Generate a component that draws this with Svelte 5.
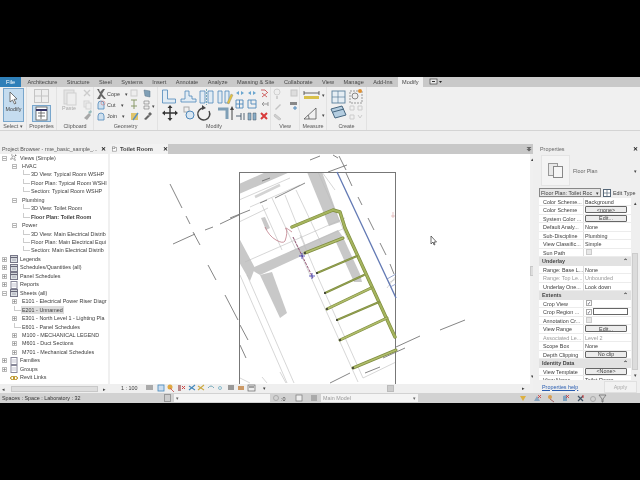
<script>
  const tabs = ["Architecture","Structure","Steel","Systems","Insert","Annotate","Analyze","Massing & Site","Collaborate","View","Manage","Add-Ins"];

  // x is where the label starts, kind picks the little icon
  const tree = [
    { t: "Views (Simple)", x: 20, open: 1, kind: "views" },
    { t: "HVAC", x: 22, open: 1 },
    { t: "3D View: Typical Room WSHP", x: 31, leaf: 1 },
    { t: "Floor Plan: Typical Room WSHI", x: 31, leaf: 1 },
    { t: "Section: Typical Room WSHP", x: 31, leaf: 1 },
    { t: "Plumbing", x: 22, open: 1 },
    { t: "3D View: Toilet Room", x: 31, leaf: 1 },
    { t: "Floor Plan: Toilet Room", x: 31, leaf: 1, bold: 1 },
    { t: "Power", x: 22, open: 1 },
    { t: "3D View: Main Electrical Distrib", x: 31, leaf: 1 },
    { t: "Floor Plan: Main Electrical Equi", x: 31, leaf: 1 },
    { t: "Section: Main Electrical Distrib", x: 31, leaf: 1 },
    { t: "Legends", x: 20, closed: 1, kind: "doc" },
    { t: "Schedules/Quantities (all)", x: 20, closed: 1, kind: "doc" },
    { t: "Panel Schedules", x: 20, closed: 1, kind: "doc" },
    { t: "Reports", x: 20, closed: 1, kind: "page" },
    { t: "Sheets (all)", x: 20, open: 1, kind: "doc" },
    { t: "E101 - Electrical Power Riser Diagr", x: 22, closed: 1 },
    { t: "E201 - Unnamed", x: 22, sel: 1, leaf: 1 },
    { t: "E301 - North Level 1 - Lighting Pla", x: 22, closed: 1 },
    { t: "E601 - Panel Schedules", x: 22, leaf: 1 },
    { t: "M100 - MECHANICAL LEGEND", x: 22, closed: 1 },
    { t: "M601 - Duct Sections", x: 22, closed: 1 },
    { t: "M701 - Mechanical Schedules", x: 22, closed: 1 },
    { t: "Families", x: 20, closed: 1, kind: "page" },
    { t: "Groups", x: 20, closed: 1, kind: "page" },
    { t: "Revit Links", x: 20, kind: "link" },
  ];

  const props = [
    { l: "Color Scheme...", v: "Background" },
    { l: "Color Scheme", b: "<none>" },
    { l: "System Color ...", b: "Edit..." },
    { l: "Default Analy...", v: "None" },
    { l: "Sub-Discipline", v: "Plumbing" },
    { l: "View Classific...", v: "Simple" },
    { l: "Sun Path", c: 1, off: 1 },
    { h: "Underlay" },
    { l: "Range: Base L...", v: "None" },
    { l: "Range: Top Le...", v: "Unbounded", dim: 1 },
    { l: "Underlay One...", v: "Look down" },
    { h: "Extents" },
    { l: "Crop View", c: 1, on: 1 },
    { l: "Crop Region ...", c: 1, on: 1, box: 1 },
    { l: "Annotation Cr...", c: 1, off: 1 },
    { l: "View Range", b: "Edit..." },
    { l: "Associated Le...", v: "Level 2", dim: 1 },
    { l: "Scope Box", v: "None" },
    { l: "Depth Clipping", b: "No clip" },
    { h: "Identity Data" },
    { l: "View Template", b: "<None>" },
    { l: "View Name", v: "Toilet Room" },
  ];

  // branch pipes off the main run, thick or thin, in page coordinates
  const branches = [
    [305, 253, 343, 238, 3],
    [317, 273, 357, 256, 2],
    [325, 293, 364, 275, 2],
    [327, 309, 371, 288, 3],
    [337, 320, 379, 302, 2],
    [340, 340, 387, 318, 3],
    [353, 368, 396, 350, 3],
  ];

  const thin = [
    [239,200,290,178],[250,207,300,185],[262,205,282,250],[272,198,296,250],[239,222,268,208],
    [285,195,305,245],[296,190,322,245],[290,252,345,228],[245,262,345,218],[318,172,348,240],
    [240,275,287,383],[247,275,294,383],[310,275,358,382],[317,275,363,378],[293,237,310,275],[300,235,317,275],
    [363,378,396,362],[322,172,335,190],[388,283,396,279],[387,278,396,298],[396,276,387,288],
    [240,378,250,383],[262,377,267,383],[280,372,286,383],
  ];
  const dark = [
    [275,198,305,183],[262,181,270,178],[260,203,267,200],[328,172,347,165],[230,218,250,210],
    [170,184,182,208],[186,216,190,224],[205,230,213,227],[220,224,239,215],[173,244,195,234],
    [193,232,200,245],[225,295,238,320],[208,265,216,280],[240,345,246,358],[240,325,248,340],
    [330,383,350,373],[383,358,405,348],[365,373,380,367],[396,347,420,336],[440,330,465,320],
    [339,156,346,170],[346,173,352,186],[358,197,362,205],[368,218,374,230],[380,243,386,255],[390,264,394,274],
    [310,160,320,156],[333,155,338,158],[360,150,366,147],
  ];
</script>

<div class="screen">
  <div class="revit">
    <div class="menu">
      <span class="file">File</span>
      {#each tabs as t}<span>{t}</span>{/each}
      <span class="active">Modify</span>
      <svg width="14" height="8" viewBox="0 0 14 8"><rect x="1" y="1" width="7" height="5" fill="#e8e8e8" stroke="#444" stroke-width=".7"/><rect x="3" y="3" width="3" height="1" fill="#333"/><path d="M10 3h3l-1.500 2z" fill="#222"/></svg>
    </div>

    <div class="ribbon">
      <div class="panel" style="width:27px">
        <svg viewBox="0 87 27 35" width="27" height="35">
          <rect x="3.500" y="88.500" width="20" height="33" fill="#c5dcef" stroke="#78a6cc"/>
          <path d="M10 92l0 10 2.500-2 2 4 1.500-.8-2-3.800 3-.4z" fill="#fff" stroke="#555" stroke-width=".8"/>
          <text x="13.500" y="111" class="tx" text-anchor="middle">Modify</text>
        </svg>
        <div class="plabel">Select ▾</div>
      </div>
      <div class="panel" style="width:30px">
        <svg viewBox="27 87 30 35" width="30" height="35">
          <g fill="#eee" stroke="#c4c4c4"><rect x="34.500" y="89.500" width="7" height="13"/><rect x="41.500" y="89.500" width="7" height="13"/><path d="M34 96h15"/></g>
          <rect x="32.500" y="105.500" width="18" height="16" fill="#c5dcef" stroke="#78a6cc"/>
          <rect x="36" y="107" width="11" height="13" fill="#fff" stroke="#555" stroke-width=".8"/>
          <path d="M36 110h11" stroke="#336" stroke-width="2"/><path d="M38 113h7M38 116h7M41 111v8" stroke="#555" stroke-width=".8"/>
        </svg>
        <div class="plabel">Properties</div>
      </div>
      <div class="panel" style="width:37px">
        <svg viewBox="57 87 37 35" width="37" height="35">
          <rect x="64" y="90" width="10" height="14" fill="#e4e4e4" stroke="#cfcfcf"/><rect x="67" y="93" width="9" height="12" fill="#eee" stroke="#d0d0d0"/>
          <text x="69" y="110" class="tx dimtx" text-anchor="middle">Paste</text>
          <path d="M84 90l6 6M90 90l-6 6" stroke="#ccc" stroke-width="1.400"/>
          <rect x="84" y="101" width="5" height="6" fill="#eee" stroke="#d4d4d4"/><rect x="86" y="103" width="5" height="6" fill="#eee" stroke="#d4d4d4"/>
          <path d="M84 118l5-5 2 2-4 5z" fill="#a8a8a8"/><path d="M88 112l3-2 1 2-2 2z" fill="#9bb"/>
        </svg>
        <div class="plabel">Clipboard</div>
      </div>
      <div class="panel" style="width:64px">
        <svg viewBox="94 87 64 35" width="64" height="35">
          <path d="M97 89l3 5-3 5h3l1-3 3 3h2l-4-5 3-5h-2l-3 3-1-3z" fill="#666"/>
          <text x="107" y="96" class="tx">Cope</text><text x="125" y="96" class="tx">▾</text>
          <path d="M98 104a3 3 0 1 1 6 0v5h-6z" fill="#cfe0ee" stroke="#4f88ba" stroke-width=".8"/><circle cx="103" cy="103" r="2" fill="none" stroke="#c66" stroke-width=".5"/>
          <text x="107" y="107" class="tx">Cut</text><text x="121" y="107" class="tx">▾</text>
          <path d="M98 116a3 3 0 0 1 6 0v4h-6z" fill="#cfe0ee" stroke="#4f88ba" stroke-width=".8"/>
          <text x="107" y="118" class="tx">Join</text><text x="122" y="118" class="tx">▾</text>
          <rect x="131" y="90" width="6" height="6" fill="#eee" stroke="#ccc"/>
          <path d="M144 90l6 1v6l-5-1z" fill="#7f9fb6" stroke="#5a7488" stroke-width=".5"/>
          <path d="M131 100h6M134 100v9M131 106h6" stroke="#8a9a6a" stroke-width="1"/>
          <path d="M144 101h5v3h-5zM144 106h5v3h-5z" fill="#eee" stroke="#777" stroke-width=".6"/><text x="152" y="108" class="tx">▾</text>
          <rect x="131" y="113" width="7" height="7" fill="#e0c46a"/><path d="M133 120l5-7" stroke="#5a90c0" stroke-width="1.400"/>
          <path d="M144 119l4-4 2 1-4 4zM148 114l2-2 2 2-2 2z" fill="#666"/>
        </svg>
        <div class="plabel">Geometry</div>
      </div>
      <div class="panel" style="width:113px">
        <svg viewBox="158 87 113 35" width="113" height="35">
          <path d="M162.500 90v13h13v-4h-8v-9z" fill="#e2ecf4" stroke="#4f88ba" stroke-width=".8"/>
          <path d="M181 102h15v-3h-4v-3h-3v-5h-4v8h-4z" fill="#e2ecf4" stroke="#4f88ba" stroke-width=".8"/>
          <path d="M200 91h5v12h-5zM208 91h5v12h-5z" fill="#e2ecf4" stroke="#4f88ba" stroke-width=".8"/><path d="M206.500 89v16" stroke="#7ab" stroke-dasharray="2 1"/>
          <path d="M218 91h4v12h-4zM225 91h4v12h-4z" fill="#e2ecf4" stroke="#4f88ba" stroke-width=".8"/><path d="M227 103l4-9 2 1-4 9z" fill="#e3c23c" stroke="#888" stroke-width=".4"/>
          <path d="M170 107v12M164 113h12" stroke="#333" stroke-width="1.400"/><path d="M170 105l2.500 3h-5zM170 121l2.500-3h-5zM162 113l3-2.500v5zM178 113l-3-2.500v5z" fill="#333"/>
          <rect x="184" y="107" width="5" height="5" fill="none" stroke="#aaa"/><circle cx="190" cy="115" r="4" fill="#d8e6f2" stroke="#4f88ba"/>
          <path d="M209 111a6 6 0 1 1-5-3" fill="none" stroke="#444" stroke-width="1.400"/><path d="M202 105l4 3-4 2z" fill="#444"/>
          <path d="M218 109h9v10" fill="none" stroke="#7f9fb6" stroke-width="3"/><path d="M232 120v-11" stroke="#444"/><path d="M232 106l2 4h-4z" fill="#444"/>
          <path d="M236 93l3-2v4zM244 93l-3-2v4zM248 93l3-2v4zM256 93l-3-2v4z" fill="#6aa6d0"/>
          <path d="M261 90h4l3 3M262 97l5-4M262 93l5 4" fill="none" stroke="#c55" stroke-width=".9"/>
          <path d="M236 100h7v8h-7zM239.500 100v8M236 104h7M248 100h8v8h-8zM251 100v4h5" fill="none" stroke="#4f88ba" stroke-width=".9"/>
          <path d="M262 104h6M262 104l2-2M262 104l2 2M268 102v4" fill="none" stroke="#999"/>
          <path d="M236 116h5M241 113v7M244 113v7" fill="none" stroke="#456" stroke-width=".9"/><path d="M248 113h3v7h-3zM253 113h3v7h-3z" fill="#8aaec8" stroke="#456" stroke-width=".5"/>
          <path d="M261 113l6 6M267 113l-6 6" stroke="#d83a3a" stroke-width="2"/>
        </svg>
        <div class="plabel">Modify</div>
      </div>
      <div class="panel" style="width:29px">
        <svg viewBox="271 87 29 35" width="29" height="35">
          <circle cx="277" cy="92" r="3" fill="#eee" stroke="#d0d0d0"/><path d="M276 96h2v3h-2z" fill="#d0d0d0"/><rect x="291" y="90" width="6" height="6" fill="#ddd" stroke="#c4c4c4"/>
          <path d="M275 109l5-5 1 1-5 5z" fill="#c4c4c4"/><rect x="290" y="102" width="7" height="3" fill="#888"/><path d="M295 106v4M293 108h4" stroke="#4f88ba"/>
          <path d="M275 114l6 5-2 1-5-4z" fill="#d0d0d0" stroke="#c4c4c4"/>
        </svg>
        <div class="plabel">View</div>
      </div>
      <div class="panel" style="width:27px">
        <svg viewBox="300 87 27 35" width="27" height="35">
          <path d="M304 93h15M304 91v4M319 91v4" stroke="#444" stroke-width=".8"/><rect x="304" y="96" width="15" height="3" fill="#d8c04a"/>
          <path d="M304 119l12-11v11zM309 119a6 6 0 0 0-1-4" fill="none" stroke="#444" stroke-width=".7"/>
          <text x="322" y="97" class="tx">▾</text><text x="322" y="117" class="tx">▾</text>
        </svg>
        <div class="plabel">Measure</div>
      </div>
      <div class="panel" style="width:40px">
        <svg viewBox="327 87 40 35" width="40" height="35">
          <rect x="332" y="91" width="13" height="12" fill="#e6eef4" stroke="#5a7f9c" stroke-width=".9"/><path d="M338 91v12M332 97h13" stroke="#5a7f9c" stroke-width=".7"/>
          <rect x="350" y="91" width="12" height="12" fill="none" stroke="#999" stroke-dasharray="2 1"/><circle cx="355" cy="96" r="3" fill="#eee" stroke="#888"/><circle cx="360" cy="91" r="2" fill="#e09030"/>
          <path d="M331 109l11-3 4 9-11 3z" fill="#b4cde0" stroke="#46667f"/><path d="M333 112l11-3" stroke="#46667f"/>
          <path d="M350 106h4v4h-4zM358 106h4v4h-4zM350 115h4v4h-4zM358 115l2 3 2-3" fill="none" stroke="#ccc"/>
        </svg>
        <div class="plabel">Create</div>
      </div>
    </div>

    <div class="strip"></div>

    <div class="work">
      <aside class="browser">
        <div class="head"><span>Project Browser - rme_basic_sample_...</span><b>✕</b></div>
        <div class="tree">
          {#each tree as row}
            <div class="row" class:bold={row.bold} style="padding-left:{row.x}px">
              {#if row.leaf}<i class="dash" style="left:{row.x - 8}px;width:{6}px"></i>{/if}
              {#if row.open || row.closed}
                <svg class="tog" style="left:{row.x >= 22 ? 12 : 2}px" width="5" height="5" viewBox="0 0 5 5"><rect x=".5" y=".5" width="4" height="4" fill="#fff" stroke="#bbb"/><path d="M1 2.500h3{row.closed ? 'M2.500 1v3' : ''}" stroke="#777" stroke-width=".6"/></svg>
              {/if}
              {#if row.kind === "views"}
                <svg class="ico" width="7" height="7" viewBox="0 0 7 7"><path d="M1 1h1.500M5 1h1v1M1 6V4M6 6H4" stroke="#666" stroke-width=".7"/><circle cx="3.500" cy="3.500" r="1.500" fill="none" stroke="#666" stroke-width=".6"/></svg>
              {:else if row.kind === "doc"}
                <svg class="ico" width="8" height="8" viewBox="0 0 8 8"><rect x=".5" y=".5" width="7" height="7" fill="#dfe3e6" stroke="#778"/><path d="M.5 2.500h7" stroke="#667" stroke-width="1.200"/><path d="M2 5h4" stroke="#889" stroke-width=".7"/></svg>
              {:else if row.kind === "page"}
                <svg class="ico" width="8" height="8" viewBox="0 0 8 8"><rect x="1" y=".5" width="6" height="7" fill="#fff" stroke="#889"/><path d="M2 3h4M2 5h4" stroke="#aab" stroke-width=".7"/></svg>
              {:else if row.kind === "link"}
                <svg class="ico" width="8" height="8" viewBox="0 0 8 8"><ellipse cx="2.500" cy="4" rx="2" ry="1.500" fill="none" stroke="#b58a10"/><ellipse cx="5.500" cy="4" rx="2" ry="1.500" fill="none" stroke="#b58a10"/></svg>
              {/if}
              <span class:sel={row.sel}>{row.t}</span>
            </div>
          {/each}
        </div>
        <div class="hscroll"><i>◂</i><em></em><i>▸</i></div>
      </aside>

      <main class="center">
        <div class="doctabs">
          <div class="doctab">
            <svg width="8" height="8" viewBox="0 0 8 8"><rect x=".5" y="1.500" width="7" height="6" fill="#fff" stroke="#888"/><rect x=".5" y=".5" width="4" height="3" fill="#fff" stroke="#888"/></svg>
            <b>Toilet Room</b><b class="x">✕</b>
          </div>
          <svg class="chev" width="6" height="6" viewBox="0 0 6 6"><path d="M.5 1h5L3 3.500zM.5 3h5L3 5.500z" fill="#666"/></svg>
        </div>
        <div class="viewport">
          <div class="canvas">
            <svg class="drawing" viewBox="110 154 420 230" width="420" height="230">
              <g fill="#c8c8c8">
                <path d="M239 184L266 172H290L239 194Z"/>
                <path d="M307 172H322L340 222L329 226Z"/>
                <path d="M250 269L338 230L343 237L260 275Z"/>
                <path d="M335 240L343 237L360 274L362 282H354Z"/>
                <path d="M261 218L265 217L270 228L266 230Z"/>
                <path d="M239 238L255 268L250 281L239 262Z"/>
                <path d="M260 275L272 272L287 313L280 318Z"/>
              </g>
              <path d="M255 197L280 185" stroke="#d4d4d4" stroke-width="2.500"/>
              <g stroke="#bcbcbc" stroke-width=".6">
                {#each thin as l}<line x1={l[0]} y1={l[1]} x2={l[2]} y2={l[3]}/>{/each}
              </g>
              <g stroke="#666" stroke-width=".8">
                {#each dark as l}<line x1={l[0]} y1={l[1]} x2={l[2]} y2={l[3]}/>{/each}
              </g>
              <rect x="239.500" y="172.500" width="156" height="220" fill="none" stroke="#777"/>
              <path d="M337 172L396 298" stroke="#6279b4" stroke-width="1.300" fill="none"/>
              <path d="M387 279L396 274M396 284L390 287" stroke="#7f92c4" stroke-width=".8" fill="none"/>
              <path d="M265 227Q269 236 276 240T285 241Q288 232 286 229T292 232" fill="none" stroke="#b66a78" stroke-width=".7"/>
              <path d="M293 237L313 278" stroke="#8a4468" stroke-width=".9" stroke-dasharray="3 1"/>
              <path d="M299 256h6M302 253v6M309 276h6M312 273v6" stroke="#3a3ab0" stroke-width=".8"/>
              <g fill="none" stroke-linejoin="round" stroke-linecap="round">
                <path d="M292 227L333 210L340 212L345 228L395 337" stroke="#7f8d3e" stroke-width="3.400"/>
                <path d="M292 227L333 210L340 212L345 228L395 337" stroke="#a5b45e" stroke-width="2"/>
                {#each branches as b}
                  <line x1={b[0]} y1={b[1]} x2={b[2]} y2={b[3]} stroke="#7f8d3e" stroke-width={b[4]}/>
                  <line x1={b[0]} y1={b[1]} x2={b[2]} y2={b[3]} stroke="#b0bd6c" stroke-width={b[4] - 1.600}/>
                  <circle cx={b[0]} cy={b[1]} r="1" fill="#333" stroke="none"/>
                {/each}
              </g>
              <path d="M393 212v6M391 216h4" stroke="#d8a0a0" stroke-width=".6"/>
              <path d="M431 236v8l2-2 1 3 1-.5-1-2.500h2.500z" fill="#fff" stroke="#333" stroke-width=".7"/>
            </svg>
            <div class="viewbar">
              <span class="scale">1 : 100</span>
              <svg width="115" height="8" viewBox="0 0 115 8">
                <rect x="0" y="1" width="7" height="5" fill="#aaa"/><rect x="12" y="1" width="6" height="6" fill="#cde" stroke="#48b" stroke-width=".8"/>
                <circle cx="24" cy="3" r="2.500" fill="#e0a840"/><path d="M24 4l4 4" stroke="#c66"/>
                <path d="M32 1h3v6h-3z" fill="#b88"/><path d="M36 2l3 3M39 2l-3 3" stroke="#c44"/>
                <path d="M43 6l6-5M43 2l6 4" stroke="#48b" stroke-width="1.100"/><path d="M52 6l6-5M52 2l6 4" stroke="#ca4" stroke-width="1.100"/>
                <path d="M62 4q3-4 6 0" stroke="#7ab" fill="none"/><circle cx="74" cy="4" r="1.500" fill="none" stroke="#8bc"/>
                <rect x="82" y="1" width="6" height="5" fill="#999"/><path d="M92 2h6v4h-6z" fill="#c96"/>
                <rect x="102" y="1" width="7" height="6" fill="#eee" stroke="#666" stroke-width=".7"/><path d="M103 3h5" stroke="#555"/>
              </svg>
              <span class="more">▾</span>
              <span class="thumb"></span>
              <span class="arrow">▸</span>
            </div>
          </div>
          <div class="vscroll"><i>▴</i><em></em><i>▾</i></div>
        </div>
      </main>

      <aside class="props">
        <div class="head"><span class="ptitle">Properties</span><b>✕</b></div>
        <div class="typebox">
          <div class="thumbbox">
            <svg width="16" height="15" viewBox="0 0 16 15"><rect x=".5" y=".5" width="9" height="12" fill="#e8e8e8" stroke="#999"/><rect x="5.500" y="3.500" width="9" height="11" fill="#f6f6f6" stroke="#888"/></svg>
          </div>
          <span>Floor Plan</span><i>▾</i>
        </div>
        <div class="selector">
          <div class="combo"><span>Floor Plan: Toilet Roc</span><i>▾</i></div>
          <svg width="8" height="8" viewBox="0 0 8 8"><rect x=".5" y=".5" width="7" height="7" fill="#fff" stroke="#567"/><path d="M4 .5v7M.5 4h7" stroke="#567" stroke-width=".7"/></svg>
          <span>Edit Type</span>
        </div>
        <div class="table">
          <div class="rows">
            {#each props as p}
              {#if p.h}
                <div class="sect"><span>{p.h}</span><i>⌃</i></div>
              {:else}
                <div class="prop">
                  <span class="lab" class:dim={p.dim}>{p.l}</span>
                  <span class="val" class:dim={p.dim}>
                    {#if p.b}<span class="btn">{p.b}</span>
                    {:else if p.c}
                      <span class="check" class:gone={p.off}>{p.on ? "✓" : ""}</span>{#if p.box}<span class="field"></span>{/if}
                    {:else}{p.v}{/if}
                  </span>
                </div>
              {/if}
            {/each}
          </div>
          <div class="pscroll"><i>▴</i><em></em><i>▾</i></div>
        </div>
        <div class="pfoot"><span class="help">Properties help</span><span class="apply">Apply</span></div>
      </aside>
    </div>

    <div class="status">
      <span class="stext">Spaces : Space : Laboratory : 32</span>
      <svg width="7" height="8" viewBox="0 0 7 8"><rect x=".5" y=".5" width="6" height="7" fill="#ccc" stroke="#999"/></svg>
      <span class="input wide"><i>▾</i></span>
      <svg width="34" height="8" viewBox="0 0 34 8"><circle cx="3" cy="4" r="2.500" fill="none" stroke="#aaa"/><text x="8" y="7" class="tx">:0</text><rect x="23" y="1" width="6" height="6" fill="#eee" stroke="#777" stroke-width=".7"/></svg>
      <svg width="8" height="8" viewBox="0 0 8 8"><rect x="1" y="1" width="6" height="6" fill="#aaa"/></svg>
      <span class="input model">Main Model<i>▾</i></span>
      <svg class="sicons" width="88" height="9" viewBox="0 0 88 9">
        <path d="M1 2h6l-3 5z" fill="#dcb040"/>
        <path d="M15 7l3-5 3 5z" fill="#8aa6c0"/><path d="M19 1l3 3M22 1l-3 3" stroke="#c33" stroke-width=".8"/>
        <circle cx="31" cy="3" r="2" fill="#d8a050"/><path d="M31 5l4 3" stroke="#a66"/>
        <path d="M44 7V2l4-1v6z" fill="#7fa4c0"/><path d="M47 1l3 3M50 1l-3 3" stroke="#c33" stroke-width=".8"/>
        <path d="M59 2l5 5M64 2l-5 5" stroke="#456" stroke-width="1.200"/><path d="M64 1v3" stroke="#c33"/>
        <circle cx="74" cy="5" r="2.500" fill="none" stroke="#aaa"/>
        <path d="M80 1h7l-3 4v3h-1V5z" fill="none" stroke="#666" stroke-width=".7"/>
      </svg>
    </div>
  </div>
</div>

<style>
  :global(body) {
    margin: 0;
    background: #000;
  }
  .screen {
    width: 640px;
    height: 480px;
    background: #000;
    padding: 77px 0;
    box-sizing: border-box;
    overflow: hidden;
    font-family: "Liberation Sans", Arial, sans-serif;
    font-size: 5.4px;
    color: #3c3c3c;
  }
  .revit {
    height: 326px;
    display: flex;
    flex-direction: column;
    filter: blur(0.4px);
  }
  .tx {
    font-size: 5.4px;
    fill: #444;
  }
  .dimtx {
    fill: #aaa;
  }
  .menu {
    height: 9.500px;
    flex: none;
    background: #c9c9c9;
    display: flex;
    align-items: center;
    gap: 9.500px;
    color: #444;
    font-size: 5.600px;
  }
  .menu svg {
    margin-left: 1px;
  }
  .file {
    background: #2f7fb8;
    color: #fff;
    align-self: stretch;
    width: 21px;
    display: flex;
    align-items: center;
    justify-content: center;
    margin-right: -3px;
  }
  .active {
    align-self: stretch;
    background: #f0f0f0;
    display: flex;
    align-items: center;
    padding: 0 4px;
    margin: 0 -4px;
  }
  .ribbon {
    height: 44.500px;
    flex: none;
    background: #f0f0f0;
    border-bottom: 1px solid #d4d4d4;
    box-sizing: border-box;
    display: flex;
  }
  .panel {
    flex: none;
    border-right: 1px solid #e2e2e2;
    box-sizing: border-box;
    display: flex;
    flex-direction: column;
    overflow: hidden;
  }
  .panel svg {
    display: block;
    flex: none;
  }
  .plabel {
    text-align: center;
    color: #555;
    padding-top: 1.500px;
  }
  .strip {
    height: 12.500px;
    flex: none;
    background: #efefef;
  }
  .work {
    flex: 1;
    min-height: 0;
    display: flex;
    background: #f0f0f0;
  }
  .browser {
    width: 108px;
    flex: none;
    background: #fff;
    display: flex;
    flex-direction: column;
    overflow: hidden;
  }
  .head {
    height: 10px;
    flex: none;
    background: #efefef;
    display: flex;
    align-items: center;
    justify-content: space-between;
    padding: 0 2px;
    color: #555;
    white-space: nowrap;
  }
  .head b {
    color: #222;
    font-size: 6px;
  }
  .tree {
    flex: 1;
    min-height: 0;
  }
  .row {
    height: 8.460px;
    line-height: 8.460px;
    position: relative;
    white-space: nowrap;
    overflow: hidden;
    display: flex;
    align-items: center;
  }
  .row .ico {
    position: absolute;
    left: 10px;
    top: 0.500px;
  }
  .tog {
    position: absolute;
    top: 2px;
  }
  .dash {
    position: absolute;
    top: 0;
    height: 4px;
    border-left: 1px solid #ccc;
    border-bottom: 1px solid #ccc;
  }
  .bold {
    font-weight: bold;
  }
  .sel {
    background: #dcdcdc;
    padding: 0 1px;
    margin-left: -1px;
  }
  .hscroll {
    height: 9px;
    flex: none;
    display: flex;
    align-items: center;
    justify-content: space-between;
    background: #efefef;
    padding: 0 2px;
  }
  .hscroll i,
  .vscroll i,
  .pscroll i {
    font-style: normal;
    font-size: 5px;
    color: #444;
  }
  .hscroll em {
    height: 6px;
    width: 87px;
    background: #dedede;
    border: 1px solid #c8c8c8;
    box-sizing: border-box;
  }
  .center {
    flex: 1;
    min-width: 0;
    margin-left: 2px;
    display: flex;
    flex-direction: column;
  }
  .doctabs {
    height: 10px;
    flex: none;
    background: #c8c8c8;
    display: flex;
    align-items: center;
    justify-content: space-between;
    padding-right: 2px;
  }
  .doctab {
    width: 58px;
    height: 10px;
    flex: none;
    background: #f2f2f2;
    display: flex;
    align-items: center;
    gap: 3px;
    padding-left: 2px;
    box-sizing: border-box;
    white-space: nowrap;
  }
  .doctab b {
    font-size: 5.800px;
    color: #444;
  }
  .doctab .x {
    margin-left: 7px;
    color: #222;
  }
  .viewport {
    flex: 1;
    min-height: 0;
    display: flex;
  }
  .canvas {
    width: 420px;
    flex: none;
    background: #fff;
    display: flex;
    flex-direction: column;
  }
  .drawing {
    display: block;
    flex: none;
  }
  .viewbar {
    flex: 1;
    background: #efefef;
    display: flex;
    align-items: center;
    padding-left: 11px;
    position: relative;
  }
  .scale {
    width: 25px;
  }
  .more {
    margin-left: 2px;
  }
  .thumb {
    width: 7px;
    height: 7px;
    margin-left: 121px;
    background: #ccc;
    border: 1px solid #bbb;
    box-sizing: border-box;
  }
  .arrow {
    margin-left: auto;
    padding-right: 5px;
  }
  .vscroll {
    flex: 1;
    display: flex;
    flex-direction: column;
    align-items: center;
    justify-content: space-between;
    background: #f0f0f0;
    position: relative;
    padding: 2px 0 14px;
  }
  .vscroll em {
    position: absolute;
    top: 112px;
    left: 0;
    width: 7px;
    height: 10px;
    background: #ddd;
    border: 1px solid #c8c8c8;
    box-sizing: border-box;
  }
  .props {
    width: 107px;
    flex: none;
    margin-left: -1px;
    background: #efefef;
    display: flex;
    flex-direction: column;
    overflow: hidden;
    position: relative;
  }
  .ptitle {
    padding-left: 5px;
    color: #666;
  }
  .typebox {
    height: 34px;
    flex: none;
    display: flex;
    align-items: center;
    gap: 3px;
    padding-left: 8px;
    padding-right: 3px;
    color: #666;
  }
  .typebox i {
    margin-left: auto;
    font-style: normal;
    color: #444;
  }
  .thumbbox {
    width: 29px;
    height: 31px;
    background: #f4f4f4;
    border: 1px solid #e4e4e4;
    box-sizing: border-box;
    display: flex;
    align-items: center;
    justify-content: center;
  }
  .selector {
    height: 10px;
    flex: none;
    display: flex;
    align-items: center;
    gap: 2px;
    padding-left: 6px;
    white-space: nowrap;
  }
  .combo {
    width: 62px;
    height: 9px;
    flex: none;
    background: #e6e6e6;
    border: 1px solid #888;
    box-sizing: border-box;
    display: flex;
    justify-content: space-between;
    align-items: center;
    padding: 0 1px;
    white-space: nowrap;
    overflow: hidden;
  }
  .combo i {
    font-style: normal;
  }
  .table {
    flex: 1;
    min-height: 0;
    display: flex;
    overflow: hidden;
    padding-left: 6px;
  }
  .rows {
    width: 92px;
    flex: none;
    background: #fff;
    height: 182px;
    overflow: hidden;
  }
  .prop {
    height: 8.500px;
    display: grid;
    grid-template-columns: 45px 1fr;
    border-bottom: 1px solid #ececec;
    box-sizing: border-box;
    white-space: nowrap;
    line-height: 8px;
  }
  .lab {
    padding-left: 4px;
    overflow: hidden;
    border-right: 1px solid #ddd;
  }
  .val {
    padding-left: 1px;
    display: flex;
    align-items: center;
  }
  .dim {
    color: #999;
  }
  .btn {
    width: 42px;
    height: 7px;
    border: 1px solid #666;
    border-radius: 1px;
    box-sizing: border-box;
    background: #ececec;
    display: flex;
    align-items: center;
    justify-content: center;
  }
  .check {
    width: 6px;
    height: 6px;
    border: 1px solid #aaa;
    box-sizing: border-box;
    margin-left: 1px;
    font-size: 5px;
    line-height: 5px;
    color: #445;
  }
  .gone {
    background: #e8e8e8;
    border-color: #ccc;
  }
  .field {
    width: 35px;
    height: 7px;
    border: 1px solid #666;
    box-sizing: border-box;
    margin-left: 1px;
  }
  .sect {
    height: 8.500px;
    background: #e2e2e2;
    display: flex;
    justify-content: space-between;
    padding: 0 3px;
    line-height: 8.500px;
    font-weight: bold;
    color: #444;
  }
  .sect i {
    font-style: normal;
    font-size: 6px;
  }
  .pscroll {
    width: 8px;
    height: 182px;
    flex: none;
    display: flex;
    flex-direction: column;
    justify-content: space-between;
    align-items: center;
    padding: 2px 0;
    box-sizing: border-box;
    position: relative;
  }
  .pscroll em {
    position: absolute;
    top: 55px;
    left: 1px;
    width: 6px;
    height: 117px;
    background: #dcdcdc;
    border: 1px solid #ccc;
    box-sizing: border-box;
  }
  .pfoot {
    position: absolute;
    left: 0;
    right: 0;
    bottom: 0;
    height: 13px;
    display: flex;
    align-items: center;
    justify-content: space-between;
    padding: 0 3px 0 9px;
    background: #efefef;
  }
  .help {
    color: #2a5db0;
    text-decoration: underline;
  }
  .apply {
    width: 33px;
    height: 12px;
    background: #f2f2f2;
    border: 1px solid #e0e0e0;
    box-sizing: border-box;
    color: #aaa;
    display: flex;
    align-items: center;
    justify-content: center;
  }
  .status {
    height: 10px;
    flex: none;
    background: #d2d2d2;
    display: flex;
    align-items: center;
    gap: 3px;
    white-space: nowrap;
    color: #333;
  }
  .stext {
    width: 161px;
    padding-left: 2px;
    box-sizing: border-box;
  }
  .input {
    height: 8px;
    background: #f4f4f4;
    display: flex;
    align-items: center;
    justify-content: space-between;
    box-sizing: border-box;
    padding: 0 2px;
    color: #999;
  }
  .input i {
    font-style: normal;
    color: #666;
    font-size: 5px;
  }
  .wide {
    width: 96px;
  }
  .model {
    width: 97px;
  }
  .sicons {
    margin-left: auto;
    margin-right: 33px;
  }
</style>
